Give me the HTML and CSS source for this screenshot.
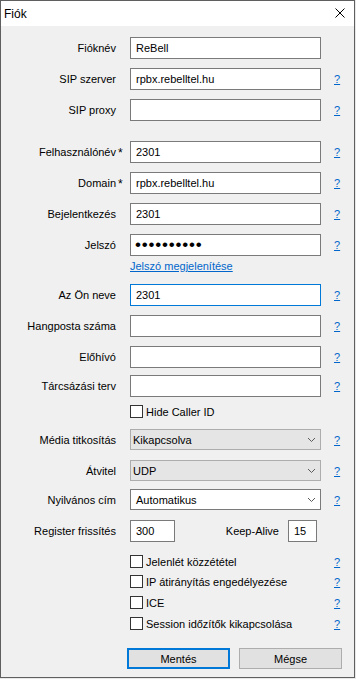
FILE: index.html
```html
<!DOCTYPE html>
<html lang="hu">
<head>
  <meta charset="UTF-8" /><meta name="viewport" content="width=device-width, initial-scale=1.0"/>
  <title>Fiók</title>
  <link rel="stylesheet" href="styles.css">
</head>
<body>
  <div class="dialog">
    <div class="titlebar">
      <span class="title">Fiók</span>
      <svg class="close" width="10" height="10" viewBox="0 0 10 10"><path d="M0.5 0.5L9.5 9.5M9.5 0.5L0.5 9.5" stroke="#000" stroke-width="1"/></svg>
    </div>

    <form class="form">
      <div class="row first">
        <label class="lbl">Fióknév</label>
        <div class="ctl"><input class="text" type="text" value="ReBell"></div>
      </div>
      <div class="row">
        <label class="lbl">SIP szerver</label>
        <div class="ctl"><input class="text" type="text" value="rpbx.rebelltel.hu"></div>
        <a class="help" href="#">?</a>
      </div>
      <div class="row">
        <label class="lbl">SIP proxy</label>
        <div class="ctl"><input class="text" type="text" value=""></div>
        <a class="help" href="#">?</a>
      </div>

      <div class="row sep">
        <label class="lbl">Felhasználónév</label><span class="req">*</span>
        <div class="ctl"><input class="text" type="text" value="2301"></div>
        <a class="help" href="#">?</a>
      </div>
      <div class="row">
        <label class="lbl">Domain</label><span class="req">*</span>
        <div class="ctl"><input class="text" type="text" value="rpbx.rebelltel.hu"></div>
        <a class="help" href="#">?</a>
      </div>
      <div class="row">
        <label class="lbl">Bejelentkezés</label>
        <div class="ctl"><input class="text" type="text" value="2301"></div>
        <a class="help" href="#">?</a>
      </div>
      <div class="row">
        <label class="lbl">Jelszó</label>
        <div class="ctl"><input class="text pass" type="password" value="jelszo2301"></div>
        <a class="help" href="#">?</a>
      </div>
      <div class="row link-row">
        <div class="ctl"><a class="link" href="#">Jelszó megjelenítése</a></div>
      </div>

      <div class="row after-link">
        <label class="lbl">Az Ön neve</label>
        <div class="ctl"><input class="text focus" type="text" value="2301"></div>
        <a class="help" href="#">?</a>
      </div>
      <div class="row">
        <label class="lbl">Hangposta száma</label>
        <div class="ctl"><input class="text" type="text" value=""></div>
        <a class="help" href="#">?</a>
      </div>
      <div class="row">
        <label class="lbl">Előhívó</label>
        <div class="ctl"><input class="text" type="text" value=""></div>
        <a class="help" href="#">?</a>
      </div>
      <div class="row tight">
        <label class="lbl">Tárcsázási terv</label>
        <div class="ctl"><input class="text" type="text" value=""></div>
        <a class="help" href="#">?</a>
      </div>
      <div class="row check">
        <label class="ctl checkbox"><input type="checkbox"><span>Hide Caller ID</span></label>
      </div>

      <div class="row combo-row mt-11">
        <label class="lbl">Média titkosítás</label>
        <div class="ctl combo disabled"><span>Kikapcsolva</span><svg width="7" height="4" viewBox="0 0 7 4"><path d="M0 0L3.5 3.5L7 0" fill="none" stroke="#5a5a5a"/></svg></div>
        <a class="help" href="#">?</a>
      </div>
      <div class="row combo-row mt-10">
        <label class="lbl">Átvitel</label>
        <div class="ctl combo disabled"><span>UDP</span><svg width="7" height="4" viewBox="0 0 7 4"><path d="M0 0L3.5 3.5L7 0" fill="none" stroke="#5a5a5a"/></svg></div>
        <a class="help" href="#">?</a>
      </div>
      <div class="row combo-row mt-8">
        <label class="lbl">Nyilvános cím</label>
        <div class="ctl combo"><span>Automatikus</span><svg width="7" height="4" viewBox="0 0 7 4"><path d="M0 0L3.5 3.5L7 0" fill="none" stroke="#5a5a5a"/></svg></div>
        <a class="help" href="#">?</a>
      </div>
      <div class="row mt-10">
        <label class="lbl">Register frissítés</label>
        <div class="ctl split">
          <input class="text short" type="text" value="300">
          <label class="inner-lbl">Keep-Alive</label>
          <input class="text tiny" type="text" value="15">
        </div>
      </div>

      <div class="row check mt-13">
        <label class="ctl checkbox"><input type="checkbox"><span>Jelenlét közzététel</span></label>
        <a class="help" href="#">?</a>
      </div>
      <div class="row check mt-7">
        <label class="ctl checkbox"><input type="checkbox"><span>IP átirányítás engedélyezése</span></label>
        <a class="help" href="#">?</a>
      </div>
      <div class="row check">
        <label class="ctl checkbox"><input type="checkbox"><span>ICE</span></label>
        <a class="help" href="#">?</a>
      </div>
      <div class="row check">
        <label class="ctl checkbox"><input type="checkbox"><span>Session időzítők kikapcsolása</span></label>
        <a class="help" href="#">?</a>
      </div>

      <div class="buttons">
        <button type="button" class="btn default">Mentés</button>
        <button type="button" class="btn">Mégse</button>
      </div>
    </form>
  </div>
</body>
</html>
```

FILE: styles.css
```css
* { box-sizing: border-box; margin: 0; padding: 0; }

body {
  background: #e8e8e8;
  color: #000;
  font-family: 'Liberation Sans', Arial, sans-serif;
  font-size: 11px;
}

.dialog {
  width: 355px;
  height: 678px;
  border: 1px solid #5f5f5f;
  background: #f0f0f0;
}

.titlebar {
  display: flex;
  align-items: center;
  justify-content: space-between;
  height: 25px;
  background: #fff;
  padding: 0 9px 0 3px;
}

.title {
  font-size: 12px;
}

.close {
  display: block;
  margin-top: -1px;
}

.form {
  padding-top: 11px;
}

.row {
  display: grid;
  grid-template-columns: 115px 14px 191px auto;
  align-items: center;
  height: 22px;
  margin-top: 9px;
}

.row.first { margin-top: 0; }
.row.sep { margin-top: 20px; }
.row.tight { margin-top: 7px; }
.row.link-row { height: 14px; margin-top: 3px; }
.row.after-link { margin-top: 11px; }
.row.check { height: 13px; margin-top: 8px; }
.row.combo-row { height: 21px; }

.mt-7 { margin-top: 7px !important; }
.mt-8 { margin-top: 8px !important; }
.mt-10 { margin-top: 10px !important; }
.mt-11 { margin-top: 11px !important; }
.mt-13 { margin-top: 13px !important; }

.lbl {
  grid-column: 1;
  text-align: right;
  white-space: nowrap;
}

.req {
  grid-column: 2;
  padding-left: 2px;
  align-self: start;
  margin-top: 6px;
  font-size: 12px;
  line-height: 12px;
}

.ctl {
  grid-column: 3;
  height: 100%;
}

.help {
  grid-column: 4;
  padding-left: 13px;
  color: #0066cc;
  text-decoration: underline;
}

input.text {
  display: block;
  width: 100%;
  height: 100%;
  background: #fff;
  border: 1px solid #7a7a7a;
  padding: 0 5px;
  font: inherit;
  color: #000;
  outline: none;
}

input.text.focus {
  border-color: #0078d7;
}

input.pass {
  font-size: 17px;
  letter-spacing: 0.8px;
  padding: 0 4px;
}

.link {
  color: #0066cc;
  text-decoration: underline;
  line-height: 14px;
  display: block;
}

.checkbox {
  display: flex;
  align-items: center;
  gap: 3px;
  white-space: nowrap;
}

.checkbox input {
  appearance: none;
  -webkit-appearance: none;
  width: 13px;
  height: 13px;
  border: 1px solid #333;
  background: #fff;
  flex: none;
}

.combo {
  display: flex;
  align-items: center;
  justify-content: space-between;
  background: #fff;
  border: 1px solid #7a7a7a;
  padding: 0 5px 0 5px;
}

.combo.disabled {
  background: #e5e5e5;
  border-color: #adadad;
  padding-left: 2px;
}

.combo svg {
  display: block;
  flex: none;
}

.split {
  display: flex;
  align-items: center;
  padding-right: 4px;
}

input.text.short {
  width: 45px;
}

input.text.tiny {
  width: 29px;
}

.inner-lbl {
  flex: 1;
  text-align: right;
  padding-right: 9px;
}

.buttons {
  display: flex;
  gap: 9px;
  padding-left: 126px;
  margin-top: 18px;
}

.btn {
  width: 103px;
  height: 21px;
  background: #e1e1e1;
  border: 1px solid #adadad;
  font: inherit;
  color: #000;
}

.btn.default {
  border: 2px solid #0078d7;
}
```
